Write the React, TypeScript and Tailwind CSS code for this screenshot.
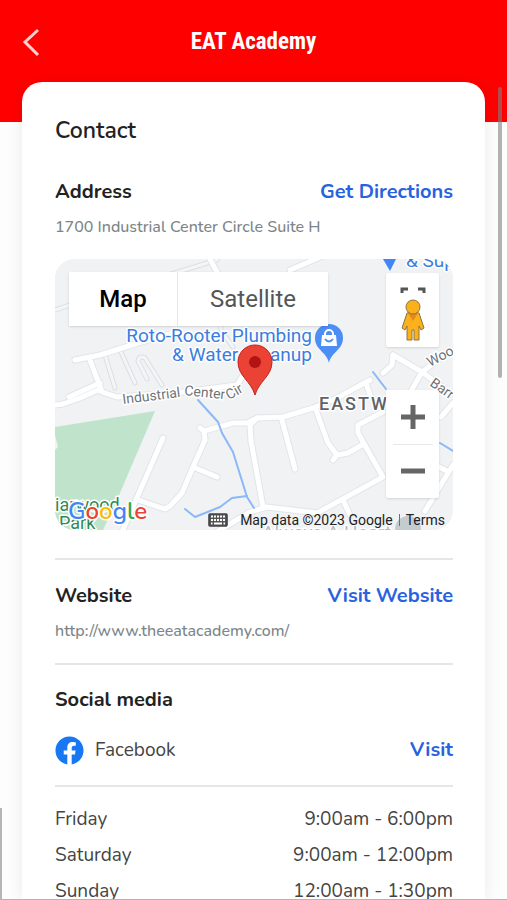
import { FaFacebook } from 'react-icons/fa';

interface IHours {
  day: string;
  time: string;
}

const hours: IHours[] = [
  { day: 'Friday', time: '9:00am - 6:00pm' },
  { day: 'Saturday', time: '9:00am - 12:00pm' },
  { day: 'Sunday', time: '12:00am - 1:30pm' },
];

const roads = [
  'M0 146 L8 145 L25 139 L43 131 L50 134 L62 138 L120 134 L182 126 L191 112 L206 92',
  'M20 101 L45 96 L83 84 L122 73',
  'M35 101 L46 130 M45 124 L25 133 L14 138',
  'M155 0 L162 13',
  'M108 179 L67 273',
  'M83 241 L110 250 L115 247 L127 234 L138 208 L150 181 L149 172 L145 169',
  'M149 172 L178 164 L192 164 L202 159 L228 158 L258 149 L282 139 L315 121',
  'M138 208 L162 218',
  'M202 159 L195 166 L196 182 L208 248',
  'M150 280 L195 253 L212 248 L262 254 L328 218 L303 174 L303 166 L328 153',
  'M227 161 L240 210',
  'M261 151 L273 184 L282 196 L293 194 L307 186 M281 197 L278 201',
  'M288 241 L295 256',
  'M338 96 L367 113 L390 130 M367 113 L383 101 M367 113 L356 132',
  'M338 96 L337 106 L328 114',
  'M311 124 L315 136',
  'M398 144 L386 158',
  'M398 206 L370 252 M380 206 L392 212',
  'M235 11 L270 -4',
];

const lanes = [
  'M0 51 L12 47 L123 13 L162 1',
  'M162 13 L166 71 L178 88',
  'M50 96 L60 129',
  'M65 91 L80 124',
  'M92 120 L83 102 Q84 96 90 99 L107 126',
];

function MapDrawing() {
  return (
    <svg
      viewBox="0 0 398 271"
      preserveAspectRatio="xMidYMid slice"
      className="absolute inset-0 h-full w-full font-[Roboto,sans-serif]"
      aria-hidden="true"
    >
      <rect width="398" height="271" fill="#f0f2f3" />
      <path d="M0 168 L100 152 L65 234 L48 271 H0 Z" fill="#c0e4cb" />
      <path d="M0 176 L3 188 L0 191 Z" fill="#f0f2f3" />
      <g fill="none" strokeLinejoin="round" strokeLinecap="round">
        {lanes.map((d) => (
          <path key={d} d={d} stroke="#dcdfe2" strokeWidth="5" />
        ))}
        {lanes.map((d) => (
          <path key={d} d={d} stroke="#f4f5f6" strokeWidth="3" />
        ))}
        {roads.map((d) => (
          <path key={d} d={d} stroke="#e2e5e8" strokeWidth="7" />
        ))}
        {roads.map((d) => (
          <path key={d} d={d} stroke="#ffffff" strokeWidth="5" />
        ))}
        <g stroke="#8ab8f8" strokeWidth="2">
          <path d="M143 141 L163 163 L167 174 L178 193 L192 238 L199 249" />
          <path d="M130 250 L140 258 L165 248 L177 239 L192 237" />
          <path d="M318 113 L331 130 M385 184 L398 192" />
        </g>
      </g>
      <circle cx="353" cy="270" r="13" fill="#c5ccd0" />
      <g stroke="#ffffff" strokeWidth="3" paintOrder="stroke" strokeLinejoin="round">
        <g fill="#3b7de0" fontSize="19">
          <text x="257" y="83" textAnchor="end">Roto-Rooter Plumbing</text>
          <text x="257" y="102" textAnchor="end">&amp; Water Cleanup</text>
          <text x="351" y="8">&amp; Sup</text>
        </g>
        <g fill="#6f7378" fontSize="14">
          <text transform="translate(68 145) rotate(-7)">Industrial</text>
          <text transform="translate(129 136) rotate(6)">Center</text>
          <text transform="translate(174 141) rotate(-30)">Cir</text>
          <text transform="translate(375 108) rotate(-28)">Woo</text>
          <text transform="translate(374 126) rotate(35)">Barr</text>
        </g>
        <text x="264" y="151" fill="#5f6368" fontSize="18" fontWeight="500" letterSpacing="2">EASTW</text>
        <g fill="#2f8a57" fontSize="18">
          <text x="0" y="252">iarwood</text>
          <text x="4" y="270">Park</text>
        </g>
        <text x="207" y="280" fill="#b7bbbf" fontSize="19">Always A Heart</text>
      </g>
      <path d="M328 0 H341 L335 12 Z" fill="#4285f4" />
      <path d="M274 104 C272 93 260 91 260 79 A14 14 0 0 1 288 79 C288 91 276 93 274 104 Z" fill="#4c8df6" />
      <path d="M267 76 H281 L282 87 H266 Z" fill="#ffffff" />
      <path d="M270 77 V75 A4 4 0 0 1 278 75 V77" fill="none" stroke="#ffffff" strokeWidth="2" />
      <path d="M270 80 Q274 85 278 80" fill="none" stroke="#4c8df6" strokeWidth="2" />
      <path
        d="M200 136 C196 122 183 117 183 103 A17 17 0 0 1 217 103 C217 117 204 122 200 136 Z"
        fill="#ea4335"
        stroke="#c5221f"
      />
      <circle cx="200" cy="103" r="6" fill="#b31412" />
    </svg>
  );
}

function Pegman() {
  return (
    <svg viewBox="0 0 26 54" className="h-[54px] w-[26px]" aria-hidden="true">
      <path d="M2 6 V2 H8 M18 2 H24 V6" fill="none" stroke="#555555" strokeWidth="3" />
      <path
        d="M7 26 Q13 24 19 26 L24 41 L21 43 L19 39 V53 H14 V43 H12 V53 H7 V39 L5 43 L2 41 Z"
        fill="#fbb01c"
        stroke="#8c7440"
      />
      <path d="M8 26 H18 L13 34 Z" fill="#e08a1e" />
      <circle cx="13" cy="20" r="7" fill="#fbb01c" stroke="#8c7440" />
    </svg>
  );
}

function KeyboardIcon() {
  return (
    <svg viewBox="0 0 20 14" className="h-[14px] w-5" aria-hidden="true">
      <rect x="1" y="1" width="18" height="12" rx="1" fill="#555555" stroke="#444444" strokeWidth="1.6" />
      <path d="M3 3.5 H17 M3 7 H17" stroke="#ffffff" strokeWidth="2" strokeDasharray="2 1" />
      <path d="M3 10.5 H4.5 M6 10.5 H14 M15.5 10.5 H17" stroke="#ffffff" strokeWidth="2" />
    </svg>
  );
}

function GoogleLogo() {
  return (
    <span className="font-['Nunito',sans-serif] text-[24px] leading-6 font-semibold [-webkit-text-stroke:3px_white] [paint-order:stroke]">
      <span className="text-[#4285f4]">G</span>
      <span className="text-[#ea4335]">o</span>
      <span className="text-[#fbbc05]">o</span>
      <span className="text-[#4285f4]">g</span>
      <span className="text-[#34a853]">l</span>
      <span className="text-[#ea4335]">e</span>
    </span>
  );
}

function ContactMap() {
  return (
    <div className="relative mt-5 h-[271px] overflow-hidden rounded-[20px] bg-[#f0f2f3] font-[Roboto,sans-serif]">
      <MapDrawing />
      <div className="absolute top-[13px] left-[14px] flex h-[54px] bg-white text-[24px] shadow">
        <button className="w-[109px] border-r border-gray-200 font-medium text-black">Map</button>
        <button className="w-[150px] text-[#565656]">Satellite</button>
      </div>
      <button
        aria-label="Street View"
        className="absolute top-[14px] right-[14px] flex h-[74px] w-[53px] items-end justify-center rounded-xs bg-white pb-1.5 shadow"
      >
        <Pegman />
      </button>
      <div className="absolute right-[14px] bottom-[32px] flex h-[108px] w-[53px] flex-col items-center rounded-xs bg-white shadow">
        <button aria-label="Zoom in" className="flex w-full flex-1 items-center justify-center">
          <svg viewBox="0 0 24 24" className="size-6">
            <path d="M12 0 V24 M0 12 H24" stroke="#666666" strokeWidth="5" />
          </svg>
        </button>
        <div className="h-px w-10 bg-gray-200"></div>
        <button aria-label="Zoom out" className="flex w-full flex-1 items-center justify-center">
          <svg viewBox="0 0 24 24" className="size-6">
            <path d="M0 12 H24" stroke="#666666" strokeWidth="5" />
          </svg>
        </button>
      </div>
      <div className="absolute bottom-1 left-[13px]">
        <GoogleLogo />
      </div>
      <div className="absolute right-0 bottom-0 flex h-5 items-center text-[14px] text-[#222222]">
        <button aria-label="Keyboard shortcuts" className="mr-3">
          <KeyboardIcon />
        </button>
        <span>Map data ©2023 Google</span>
        <span className="mx-1.5 h-3 w-px bg-gray-500"></span>
        <a href="#terms" className="pr-2">
          Terms
        </a>
      </div>
    </div>
  );
}

function App() {
  return (
    <div className="relative flex h-screen flex-col overflow-hidden bg-[#fdfdfd] font-['Nunito','Noto_Sans',sans-serif] text-[#222222]">
      <header className="grid h-[122px] shrink-0 grid-cols-[1fr_auto_1fr] items-start bg-[#ff0000] px-[22px] pt-[26px] text-white">
        <button aria-label="Back" className="flex h-8 w-5 items-center">
          <svg viewBox="0 0 18 30" className="h-[30px] w-[18px]">
            <path d="M16 3 L3 15 L16 28" fill="none" stroke="#ffd0d0" strokeWidth="3" />
          </svg>
        </button>
        <h1 className="font-['Roboto_Condensed',Roboto,sans-serif] text-[23px] leading-8 font-bold">EAT Academy</h1>
      </header>

      <main className="mx-[22px] -mt-10 flex-1 overflow-hidden rounded-t-[20px] bg-white pt-[33px] pr-8 pl-[33px] shadow-[0_0_16px_rgba(0,0,0,0.08)]">
        <h2 className="text-[23px] leading-8 font-semibold">Contact</h2>

        <section className="mt-[30px] border-b-2 border-[#e6e6e6] pb-7">
          <div className="flex items-center justify-between text-[20px] leading-[30px] font-bold">
            <h3>Address</h3>
            <a href="#directions" className="text-[#2962e0]">
              Get Directions
            </a>
          </div>
          <p className="mt-2 text-[16px] leading-6 font-medium text-[#7c868a]">1700 Industrial Center Circle Suite H</p>
          <ContactMap />
        </section>

        <section className="border-b-2 border-[#e6e6e6] pt-[21px] pb-5">
          <div className="flex items-center justify-between text-[20px] leading-[30px] font-bold">
            <h3>Website</h3>
            <a href="#website" className="text-[#2962e0]">
              Visit Website
            </a>
          </div>
          <p className="mt-2 text-[16px] leading-6 font-medium text-[#7c868a]">http://www.theeatacademy.com/</p>
        </section>

        <section className="border-b-2 border-[#e6e6e6] pt-5 pb-5">
          <h3 className="text-[20px] leading-[30px] font-bold">Social media</h3>
          <div className="mt-5 flex items-center text-[19px] leading-[30px]">
            <FaFacebook className="size-[29px] text-[#1877f2]" />
            <span className="ml-[11px] text-[#444444]">Facebook</span>
            <a href="#facebook" className="ml-auto text-[20px] font-bold text-[#2962e0]">
              Visit
            </a>
          </div>
        </section>

        <table className="mt-3.5 w-full text-[19px] text-[#444444]">
          <tbody>
            {hours.map((item: IHours) => (
              <tr key={item.day} className="h-9">
                <th scope="row" className="text-left font-normal">
                  {item.day}
                </th>
                <td className="text-right">{item.time}</td>
              </tr>
            ))}
          </tbody>
        </table>
      </main>

      <div className="absolute top-[87px] right-[5px] h-[291px] w-1 rounded-full bg-[#808080]/60"></div>
      <div className="absolute bottom-0 left-0 h-[92px] w-0.5 bg-[#b5b5b5]"></div>
      <div className="absolute bottom-0 left-0 h-px w-full bg-[#b5b5b5]"></div>
    </div>
  );
}

export default App;
